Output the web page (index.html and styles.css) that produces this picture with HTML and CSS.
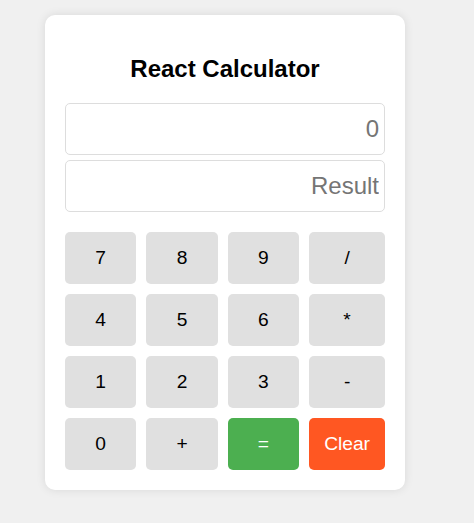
FILE: index.html
```html
<!DOCTYPE html>
<html>
<head>
<meta charset="utf-8">
<link rel="stylesheet" href="styles.css">
</head>
<body>
<div class="calculator">
  <h2 class="title">React Calculator</h2>
  <input class="display" type="text" placeholder="0">
  <input class="display result" type="text" placeholder="Result" readonly>
  <div class="keys">
    <button class="key">7</button>
    <button class="key">8</button>
    <button class="key">9</button>
    <button class="key">/</button>
    <button class="key">4</button>
    <button class="key">5</button>
    <button class="key">6</button>
    <button class="key">*</button>
    <button class="key">1</button>
    <button class="key">2</button>
    <button class="key">3</button>
    <button class="key">-</button>
    <button class="key">0</button>
    <button class="key">+</button>
    <button class="key equals">=</button>
    <button class="key clear">Clear</button>
  </div>
</div>
</body>
</html>
```
FILE: styles.css
```css
html, body {
  margin: 0;
  padding: 0;
}
body {
  background: #f0f0f0;
  font-family: "Liberation Sans", Arial, sans-serif;
  padding: 15px 0 0 45px;
  min-height: 523px;
  box-sizing: border-box;
}
.calculator {
  width: 360px;
  box-sizing: border-box;
  background: #fff;
  border-radius: 10px;
  padding: 20px;
  box-shadow: 0 0 10px rgba(0, 0, 0, 0.1);
}
.title {
  margin: 20px 0 20px;
  text-align: center;
  font-size: 24px;
  font-weight: bold;
  line-height: 28px;
  color: #000;
}
.display {
  display: block;
  width: 100%;
  height: 52px;
  box-sizing: border-box;
  border: 1px solid #ddd;
  border-radius: 5px;
  padding: 0 5px;
  font-family: "Liberation Sans", Arial, sans-serif;
  font-size: 24px;
  text-align: right;
  color: #000;
  background: #fff;
  margin: 0 0 5px;
  outline: none;
}
.display::placeholder {
  color: #757575;
}
.display.result {
  margin-bottom: 20px;
}
.keys {
  display: grid;
  grid-template-columns: repeat(4, 1fr);
  gap: 10px;
}
.key {
  padding: 15px;
  border: none;
  border-radius: 5px;
  background: #e0e0e0;
  color: #000;
  font-family: "Liberation Sans", Arial, sans-serif;
  font-size: 19.2px;
  line-height: 22px;
  cursor: pointer;
}
.key.equals {
  background: #4caf50;
  color: #fff;
}
.key.clear {
  background: #ff5722;
  color: #fff;
}
```
